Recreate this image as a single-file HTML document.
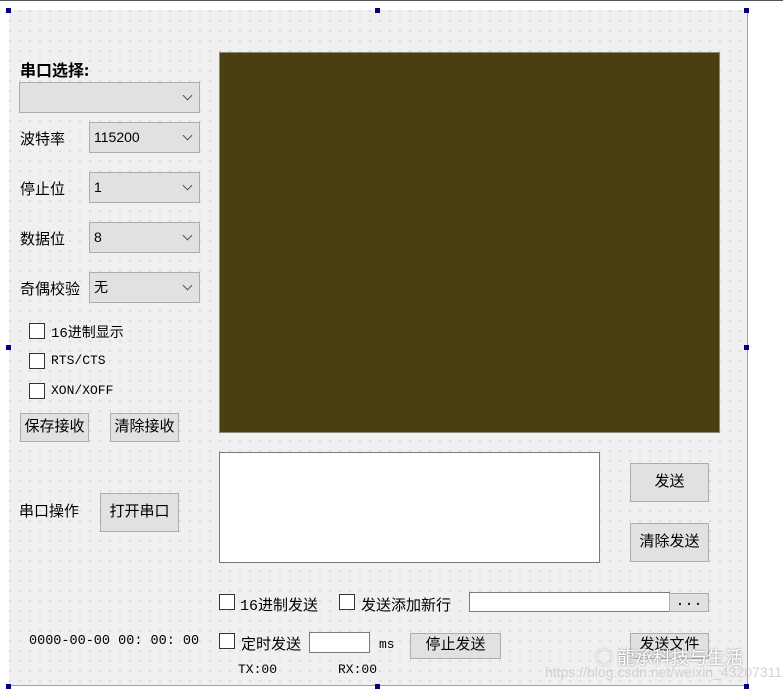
<!DOCTYPE html><html><head><meta charset="utf-8"><style>
body{margin:0;width:783px;height:689px;background:#fff;position:relative;overflow:hidden;font-family:"Liberation Mono","Noto Sans CJK SC",monospace;font-size:14px;color:#000}
.form{position:absolute;left:9px;top:10px;width:738px;height:675px;background-color:#f0f0f0;background-image:radial-gradient(circle,#a8a8a8 0.6px,transparent 0.8px);background-size:10px 10px;background-position:-4px -4px;border-right:1px solid #a0a0a0;border-bottom:1px solid #a0a0a0}
.a{position:absolute;white-space:nowrap}
.cb{position:absolute;width:14px;height:14px;background:#fff;border:1px solid #333}
.btn{position:absolute;background:#e1e1e1;border:1px solid #adadad;box-sizing:border-box;text-align:center;font-size:15px}
.sel{position:absolute;background:#e1e1e1;border:1px solid #adadad;box-sizing:border-box;font-family:"Liberation Sans","Noto Sans CJK SC",sans-serif;font-size:14px;padding-left:4px}
.sel:after{content:"";position:absolute;right:8px;top:9px;width:6px;height:6px;border-right:1px solid #555;border-bottom:1px solid #555;transform:rotate(45deg)}
.h{position:absolute;width:5px;height:5px;background:#000080}
</style></head><body>
<div style="position:absolute;left:0;top:0;width:783px;height:1px;background:#555"></div>
<div class="form"></div>
<div class="h" style="left:6px;top:8px"></div><div class="h" style="left:375px;top:8px"></div><div class="h" style="left:744px;top:8px"></div>
<div class="h" style="left:6px;top:345px"></div><div class="h" style="left:744px;top:345px"></div>
<div class="h" style="left:6px;top:684px"></div><div class="h" style="left:375px;top:684px"></div><div class="h" style="left:744px;top:684px"></div>
<div class="a" style="left:20px;top:57px;font-weight:bold;font-size:16px;font-family:'Noto Sans CJK SC',sans-serif">串口选择:</div>
<div class="sel" style="left:19px;top:82px;width:181px;height:31px"></div>
<div class="a" style="left:20px;top:128px;font-size:15px">波特率</div>
<div class="sel" style="left:89px;top:122px;width:111px;height:31px;line-height:29px">115200</div>
<div class="a" style="left:20px;top:178px;font-size:15px">停止位</div>
<div class="sel" style="left:89px;top:172px;width:111px;height:31px;line-height:29px">1</div>
<div class="a" style="left:20px;top:228px;font-size:15px">数据位</div>
<div class="sel" style="left:89px;top:222px;width:111px;height:31px;line-height:29px">8</div>
<div class="a" style="left:20px;top:278px;font-size:15px">奇偶校验</div>
<div class="sel" style="left:89px;top:272px;width:111px;height:31px;line-height:29px">无</div>
<div class="cb" style="left:29px;top:323px"></div><div class="a" style="left:51px;top:322px">16进制显示</div>
<div class="cb" style="left:29px;top:353px"></div><div class="a" style="left:51px;top:353px;font-size:13px">RTS/CTS</div>
<div class="cb" style="left:29px;top:383px"></div><div class="a" style="left:51px;top:383px;font-size:13px">XON/XOFF</div>
<div class="btn" style="left:20px;top:413px;width:69px;height:29px;line-height:27px">保存接收</div>
<div class="btn" style="left:110px;top:413px;width:69px;height:29px;line-height:27px">清除接收</div>
<div class="a" style="left:19px;top:500px;font-size:15px">串口操作</div>
<div class="btn" style="left:100px;top:493px;width:79px;height:39px;line-height:37px">打开串口</div>
<div class="a" style="left:29px;top:634px;font-size:13.5px">0000-00-00 00: 00: 00</div>
<div style="position:absolute;left:219px;top:52px;width:499px;height:379px;background:#4a3f10;border:1px solid #8a8a7a"></div>
<div style="position:absolute;left:219px;top:452px;width:379px;height:109px;background:#fff;border:1px solid #7a7a7a"></div>
<div class="btn" style="left:630px;top:463px;width:79px;height:39px;line-height:37px">发送</div>
<div class="btn" style="left:630px;top:523px;width:79px;height:39px;line-height:37px">清除发送</div>
<div class="cb" style="left:219px;top:594px"></div><div class="a" style="left:240px;top:594px;font-size:15px">16进制发送</div>
<div class="cb" style="left:339px;top:594px"></div><div class="a" style="left:361px;top:594px;font-size:15px">发送添加新行</div>
<div style="position:absolute;left:469px;top:592px;width:199px;height:18px;background:#fff;border:1px solid #7a7a7a"></div>
<div class="btn" style="left:669px;top:593px;width:40px;height:19px;line-height:15px">...</div>
<div class="cb" style="left:219px;top:633px"></div><div class="a" style="left:241px;top:633px;font-size:15px">定时发送</div>
<div style="position:absolute;left:309px;top:632px;width:59px;height:19px;background:#fff;border:1px solid #7a7a7a"></div>
<div class="a" style="left:379px;top:637px;font-size:13px">ms</div>
<div class="btn" style="left:410px;top:633px;width:91px;height:26px;line-height:24px">停止发送</div>
<div class="btn" style="left:630px;top:633px;width:79px;height:26px;line-height:24px">发送文件</div>
<div class="a" style="left:238px;top:662px;font-size:13px">TX:00</div>
<div class="a" style="left:338px;top:662px;font-size:13px">RX:00</div>
<div class="a" style="left:595px;top:644px;font-size:18px;color:#fff;text-shadow:0 0 2px #777;font-family:'Noto Sans CJK SC',sans-serif">◌ 龍承科技与生活</div>
<div class="a" style="left:545px;top:664px;font-size:14px;color:rgba(200,200,200,.8);font-family:'Liberation Sans',sans-serif">https://blog.csdn.net/weixin_43207311</div>
</body></html>
